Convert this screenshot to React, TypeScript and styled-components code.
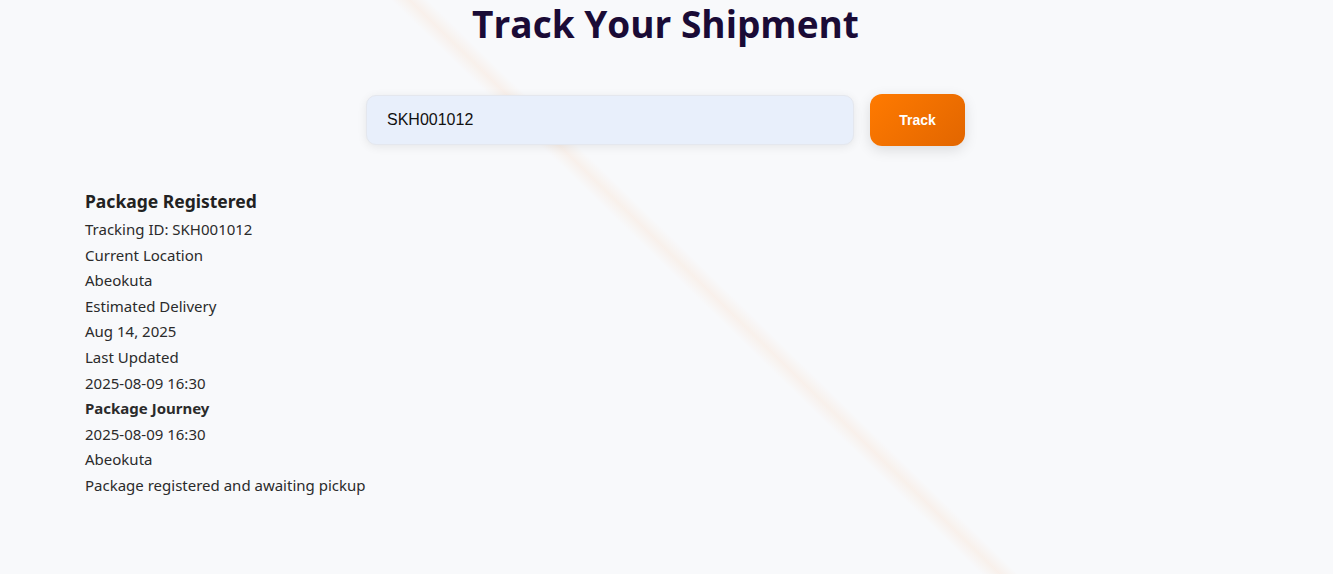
import React from "react";
import styled, { createGlobalStyle } from "styled-components";

const GlobalStyle = createGlobalStyle`
  html, body { margin: 0; padding: 0; }
  body {
    font-family: "Noto Sans", "Open Sans", sans-serif;
    background: #f8f9fb;
  }
`;

const Page = styled.div`
  min-height: 100vh;
  box-sizing: border-box;
  padding: 0 86px 40px 84px;
  background: linear-gradient(
    44.2deg,
    rgba(255, 140, 50, 0) 684px,
    rgba(255, 140, 50, 0.08) 697px,
    rgba(255, 140, 50, 0) 710px
  );
`;

const Title = styled.h1`
  margin: 0;
  padding-top: 1px;
  text-align: center;
  font-family: "Open Sans", sans-serif;
  font-weight: 700;
  font-size: 37px;
  line-height: 46px;
  color: #1a0b36;
`;

const SearchRow = styled.form`
  display: flex;
  justify-content: center;
  align-items: center;
  gap: 16px;
  margin-top: 47px;
`;

const Input = styled.input`
  width: 488px;
  height: 50px;
  box-sizing: border-box;
  padding: 0 20px;
  border: 1px solid #e4e7ee;
  border-radius: 10px;
  background: #e8effb;
  box-shadow: 0 2px 10px rgba(0, 0, 0, 0.08);
  font-family: "Liberation Sans", Arial, sans-serif;
  font-size: 16px;
  color: #111;
  outline: none;
`;

const Button = styled.button`
  width: 95px;
  height: 52px;
  border: none;
  border-radius: 12px;
  background: linear-gradient(135deg, #ff7a00, #e26600);
  box-shadow: 0 4px 14px rgba(0, 0, 0, 0.12);
  color: #fff;
  font-family: "Liberation Sans", Arial, sans-serif;
  font-weight: 700;
  font-size: 14px;
  cursor: pointer;
`;

const Result = styled.section`
  margin: 42px 0 0 1px;
  color: #2b2b2b;
  font-size: 15px;
  line-height: 25.6px;
`;

const Heading = styled.h3`
  margin: 0 0 3px;
  font-size: 17.5px;
  font-weight: 700;
  line-height: 26px;
  color: #222;
`;

const Line = styled.p<{ $bold?: boolean }>`
  margin: 0;
  font-weight: ${(p) => (p.$bold ? 700 : 400)};
`;

export default function App() {
  return (
    <>
      <GlobalStyle />
      <Page>
        <Title>Track Your Shipment</Title>
        <SearchRow onSubmit={(e) => e.preventDefault()}>
          <Input defaultValue="SKH001012" />
          <Button type="submit">Track</Button>
        </SearchRow>
        <Result>
          <Heading>Package Registered</Heading>
          <Line>Tracking ID: SKH001012</Line>
          <Line>Current Location</Line>
          <Line>Abeokuta</Line>
          <Line>Estimated Delivery</Line>
          <Line>Aug 14, 2025</Line>
          <Line>Last Updated</Line>
          <Line>2025-08-09 16:30</Line>
          <Line $bold>Package Journey</Line>
          <Line>2025-08-09 16:30</Line>
          <Line>Abeokuta</Line>
          <Line>Package registered and awaiting pickup</Line>
        </Result>
      </Page>
    </>
  );
}
